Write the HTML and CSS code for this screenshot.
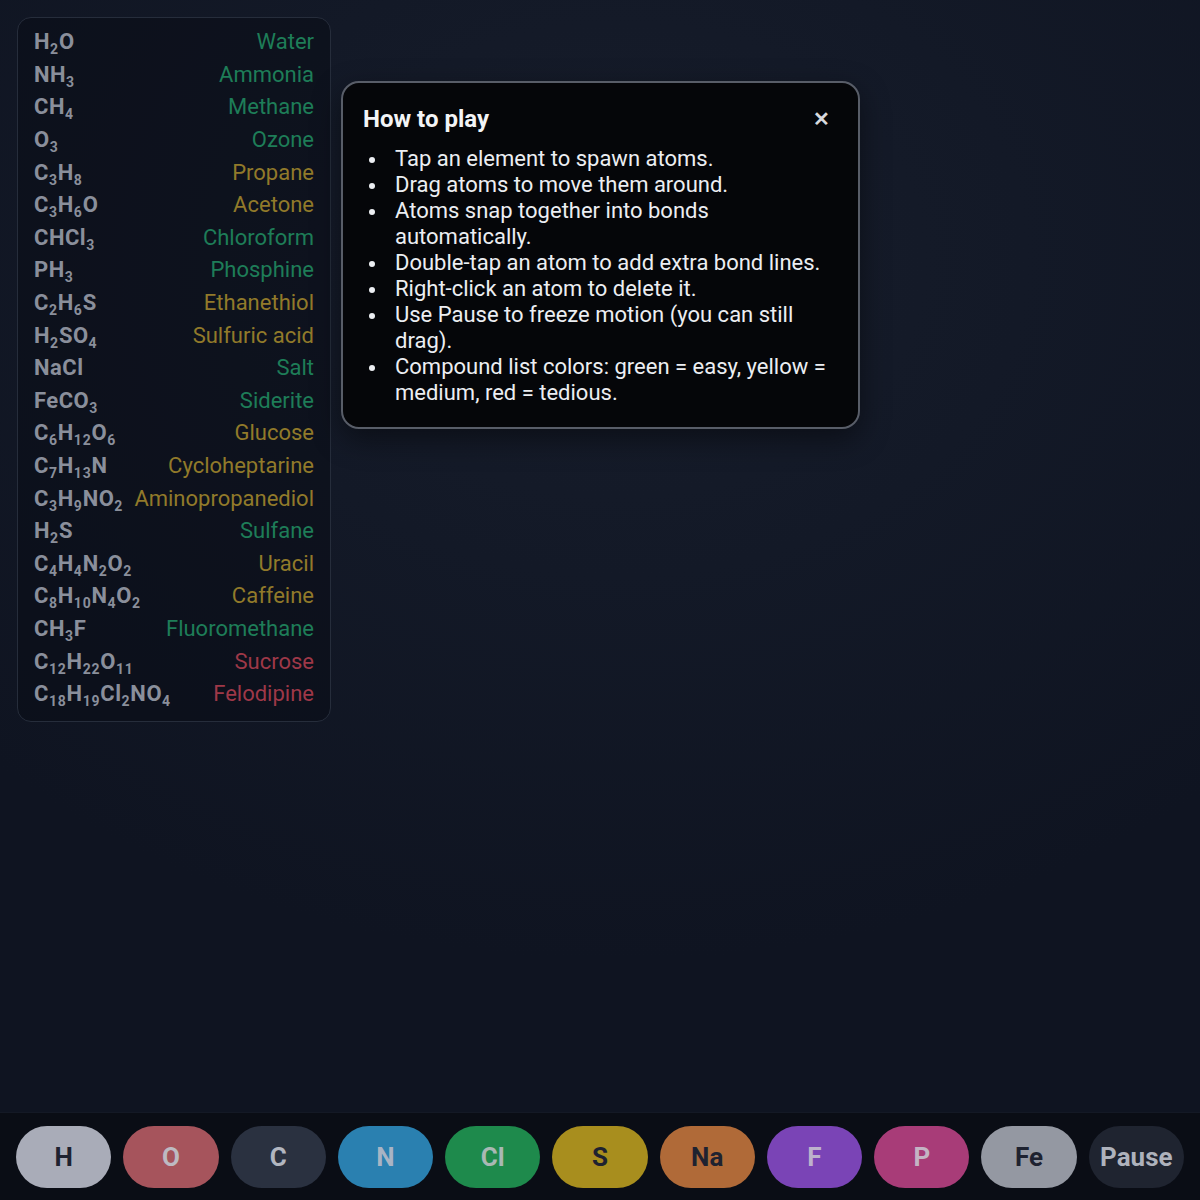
FILE: index.html
```html
<!DOCTYPE html>
<html>
<head>
<meta charset="utf-8">
<link rel="stylesheet" href="styles.css">
</head>
<body>
<div class="stage">
  <div class="compounds">
    <div class="row"><span class="f">H<sub>2</sub>O</span><span class="n easy">Water</span></div>
    <div class="row"><span class="f">NH<sub>3</sub></span><span class="n easy">Ammonia</span></div>
    <div class="row"><span class="f">CH<sub>4</sub></span><span class="n easy">Methane</span></div>
    <div class="row"><span class="f">O<sub>3</sub></span><span class="n easy">Ozone</span></div>
    <div class="row"><span class="f">C<sub>3</sub>H<sub>8</sub></span><span class="n med">Propane</span></div>
    <div class="row"><span class="f">C<sub>3</sub>H<sub>6</sub>O</span><span class="n med">Acetone</span></div>
    <div class="row"><span class="f">CHCl<sub>3</sub></span><span class="n easy">Chloroform</span></div>
    <div class="row"><span class="f">PH<sub>3</sub></span><span class="n easy">Phosphine</span></div>
    <div class="row"><span class="f">C<sub>2</sub>H<sub>6</sub>S</span><span class="n med">Ethanethiol</span></div>
    <div class="row"><span class="f">H<sub>2</sub>SO<sub>4</sub></span><span class="n med">Sulfuric acid</span></div>
    <div class="row"><span class="f">NaCl</span><span class="n easy">Salt</span></div>
    <div class="row"><span class="f">FeCO<sub>3</sub></span><span class="n easy">Siderite</span></div>
    <div class="row"><span class="f">C<sub>6</sub>H<sub>12</sub>O<sub>6</sub></span><span class="n med">Glucose</span></div>
    <div class="row"><span class="f">C<sub>7</sub>H<sub>13</sub>N</span><span class="n med">Cycloheptarine</span></div>
    <div class="row"><span class="f">C<sub>3</sub>H<sub>9</sub>NO<sub>2</sub></span><span class="n med">Aminopropanediol</span></div>
    <div class="row"><span class="f">H<sub>2</sub>S</span><span class="n easy">Sulfane</span></div>
    <div class="row"><span class="f">C<sub>4</sub>H<sub>4</sub>N<sub>2</sub>O<sub>2</sub></span><span class="n med">Uracil</span></div>
    <div class="row"><span class="f">C<sub>8</sub>H<sub>10</sub>N<sub>4</sub>O<sub>2</sub></span><span class="n med">Caffeine</span></div>
    <div class="row"><span class="f">CH<sub>3</sub>F</span><span class="n easy">Fluoromethane</span></div>
    <div class="row"><span class="f">C<sub>12</sub>H<sub>22</sub>O<sub>11</sub></span><span class="n hard">Sucrose</span></div>
    <div class="row"><span class="f">C<sub>18</sub>H<sub>19</sub>Cl<sub>2</sub>NO<sub>4</sub></span><span class="n hard">Felodipine</span></div>
  </div>

  <div class="help">
    <div class="help-head">
      <h2 class="help-title">How to play</h2>
      <span class="close">&#x2715;</span>
    </div>
    <ul class="help-list">
      <li>Tap an element to spawn atoms.</li>
      <li>Drag atoms to move them around.</li>
      <li>Atoms snap together into bonds automatically.</li>
      <li>Double-tap an atom to add extra bond lines.</li>
      <li>Right-click an atom to delete it.</li>
      <li>Use Pause to freeze motion (you can still drag).</li>
      <li>Compound list colors: green = easy, yellow = medium, red = tedious.</li>
    </ul>
  </div>
</div>

<div class="toolbar">
  <button class="btn b-h">H</button>
  <button class="btn b-o">O</button>
  <button class="btn b-c">C</button>
  <button class="btn b-n">N</button>
  <button class="btn b-cl">Cl</button>
  <button class="btn b-s">S</button>
  <button class="btn b-na">Na</button>
  <button class="btn b-f">F</button>
  <button class="btn b-p">P</button>
  <button class="btn b-fe">Fe</button>
  <button class="btn b-pause">Pause</button>
</div>
</body>
</html>
```

FILE: styles.css
```css
* { box-sizing: border-box; }
html, body {
  margin: 0;
  height: 100%;
}
body {
  width: 1200px;
  height: 1200px;
  display: flex;
  flex-direction: column;
  font-family: Roboto, "Liberation Sans", sans-serif;
  background: radial-gradient(ellipse 900px 700px at 620px 260px, #171d2b 0%, #131927 45%, #0f1421 100%);
  color: #e5e7eb;
  overflow: hidden;
}
.stage {
  flex: 1;
  position: relative;
}
.compounds {
  position: absolute;
  left: 17px;
  top: 17px;
  width: 314px;
  padding: 8px 16px 11px;
  border: 1px solid #262d3b;
  border-radius: 14px;
  background: rgba(10, 13, 22, 0.55);
}
.row {
  display: flex;
  justify-content: space-between;
  align-items: center;
  height: 32.6px;
  font-size: 22px;
  line-height: 26px;
  gap: 10px;
}
.f {
  font-weight: 700;
  color: #8a8f9b;
  white-space: nowrap;
  letter-spacing: 0.5px;
}
.f sub {
  font-size: 14px;
  line-height: 0;
  vertical-align: -5px;
  letter-spacing: 0.8px;
}
.n {
  white-space: nowrap;
}
.easy { color: #1e7d58; }
.med { color: #917a2a; }
.hard { color: #9e3848; }

.help {
  position: absolute;
  left: 341px;
  top: 81px;
  width: 519px;
  padding: 20px 20px 21px 20px;
  background: #050609;
  border: 2px solid #585d68;
  border-radius: 18px;
  box-shadow: 0 10px 30px rgba(0,0,0,0.45);
}
.help-head {
  display: flex;
  justify-content: space-between;
  align-items: center;
}
.help-title {
  margin: 0;
  font-size: 24px;
  font-weight: 700;
  line-height: 32px;
  color: #f3f4f6;
}
.close {
  font-size: 20px;
  font-weight: 700;
  color: #d7d9de;
  margin-right: 8px;
  line-height: 20px;
}
.help-list {
  list-style: none;
  margin: 11px 0 0;
  padding: 0;
  font-size: 22px;
  line-height: 26px;
  color: #eceef2;
}
.help-list li {
  display: flex;
}
.help-list li::before {
  content: "";
  flex: none;
  width: 6px;
  height: 6px;
  border-radius: 50%;
  background: #eceef2;
  margin: 11px 20px 0 6px;
}

.toolbar {
  height: 88px;
  flex: none;
  display: flex;
  gap: 12px;
  padding: 13px 16px 12px;
  background: #0a0d15;
  border-top: 1px solid #141925;
}
.btn {
  flex: 1;
  border: none;
  border-radius: 999px;
  font-family: Roboto, "Liberation Sans", sans-serif;
  font-size: 26px;
  font-weight: 700;
  padding: 0;
  height: 62px;
}
.b-h { background: #a9acb8; color: #1e2230; }
.b-o { background: #a6545c; color: #bdbac2; }
.b-c { background: #2a3140; color: #b2b6c0; }
.b-n { background: #2a80b0; color: #a9b4c4; }
.b-cl { background: #1e8a4c; color: #a9b8b4; }
.b-s { background: #a88e1e; color: #1e2230; }
.b-na { background: #b06a38; color: #1e2230; }
.b-f { background: #7a44b6; color: #bdb2cc; }
.b-p { background: #a83c78; color: #c4b4c4; }
.b-fe { background: #9498a2; color: #1e2230; }
.b-pause { background: #1f2430; color: #aeb2bc; }
```
